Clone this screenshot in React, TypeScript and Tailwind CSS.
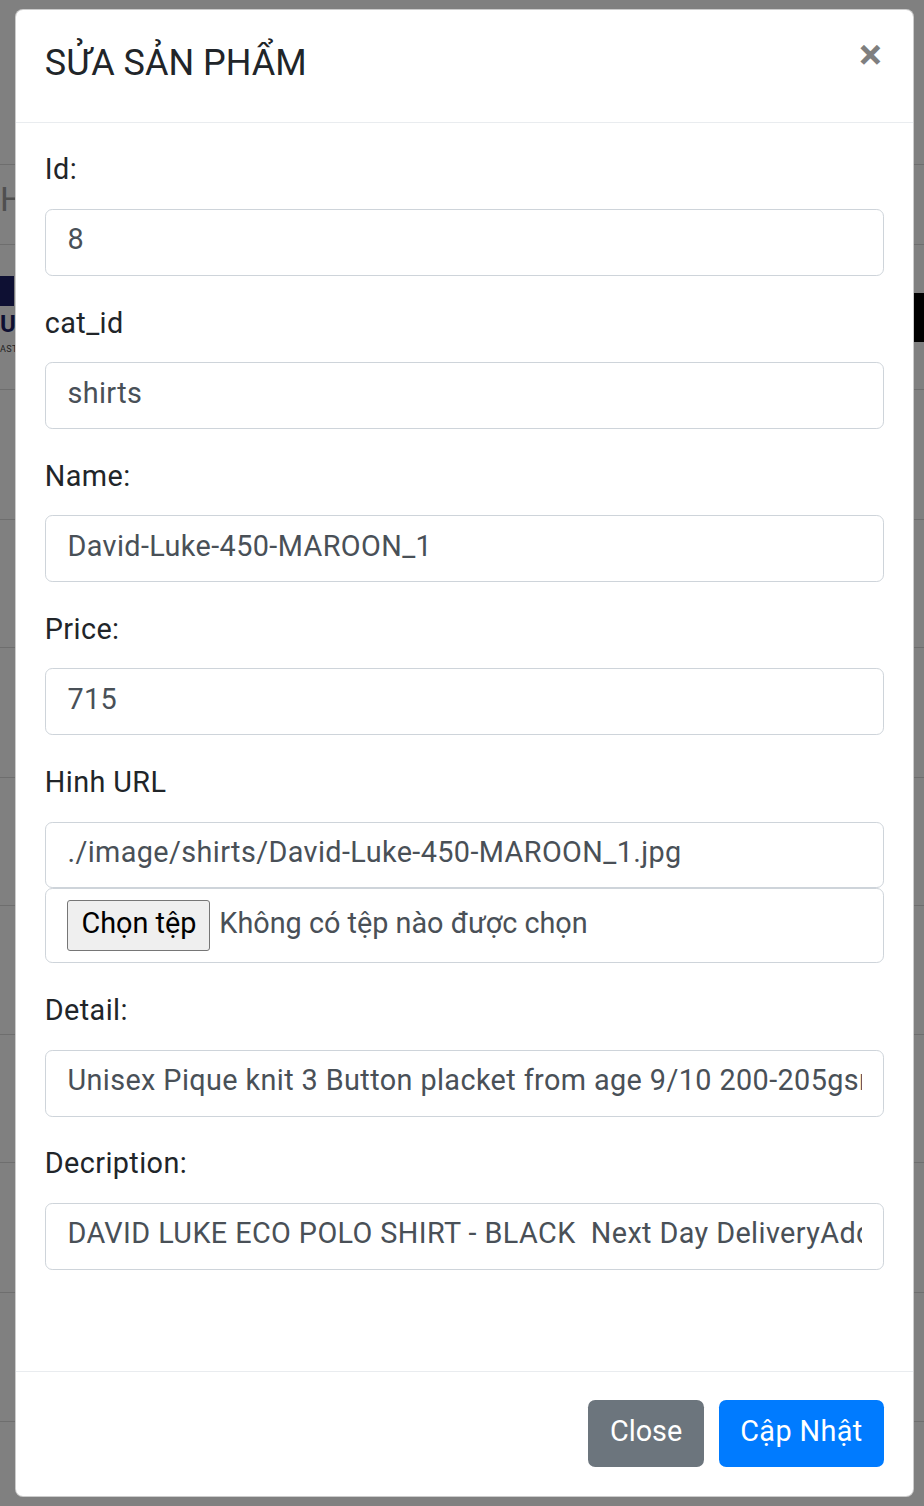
import React from "react";

const rows = [165, 80, 145, 130, 128, 130, 128, 129, 128, 130, 129, 130];

const fields = [
    { label: "Id:", value: "8" },
    { label: "cat_id", value: "shirts" },
    { label: "Name:", value: "David-Luke-450-MAROON_1" },
    { label: "Price:", value: "715" },
];

const font = { fontFamily: "Roboto, 'Noto Sans', sans-serif", letterSpacing: "0.4px" };

function Field({ label, value, file }: { label: string; value: string; file?: boolean }) {
    return (
        <div className="mb-[28.8px]">
            <label className="flex items-center h-[43.2px] pb-[6px] text-[28.8px] text-[#212529] mb-[14.4px]">{label}</label>
            <input
                readOnly
                value={value}
                className="block w-full h-[66.8px] pl-[21.6px] pr-[21.6px] pb-[6px] border border-[#ced4da] rounded-[7.2px] bg-white text-[28.8px] text-[#495057] outline-none"
                style={font}
            />
            {file && (
                <div className="flex items-center h-[75px] px-[21.6px] border border-[#ced4da] rounded-[7.2px] bg-white tracking-normal">
                    <span className="h-[51px] px-[13px] pb-[4px] flex items-center border border-[#767676] rounded-[3px] bg-[#efefef] text-[28.8px] text-black">
                        Chọn tệp
                    </span>
                    <span className="ml-[9px] pb-[4px] text-[28.8px] text-[#495057]">Không có tệp nào được chọn</span>
                </div>
            )}
        </div>
    );
}

export default function App() {
    return (
        <div className="relative h-[1506px] w-[924px] overflow-hidden bg-[#808080]" style={font}>
            {/* trang phía sau */}
            <div className="flex flex-col">
                {rows.map((h, i) => (
                    <div key={i} className="relative border-b border-[#6e6e6e] shrink-0" style={{ height: h }} />
                ))}
            </div>
            <div className="absolute left-0 top-[182px] text-[34px] leading-none text-[#4f4f4f]">H</div>
            <div className="absolute left-0 top-[276px] w-[14px] h-[30px] bg-[#0e1033]" />
            <div className="absolute left-0 top-[312px] text-[24px] leading-none font-bold text-[#0e1033]">U</div>
            <div className="absolute left-0 top-[345px] text-[9px] leading-none text-[#222]">AST</div>
            <div className="absolute right-0 top-[293px] w-[11px] h-[49px] bg-black" />

            {/* modal */}
            <div className="absolute left-[15px] top-[9px] w-[899px] bg-white border border-black/20 rounded-[8px]">
                <div className="flex items-start justify-between p-[28.8px] border-b border-[#e9ecef]">
                    <h5 className="h-[54px] pb-[6px] flex items-center text-[36px] tracking-normal text-[#212529]">SỬA SẢN PHẨM</h5>
                    <span className="text-[43.2px] leading-none font-bold text-black/50 -mt-[6px] mr-[2px]">×</span>
                </div>
                <div className="px-[28.8px] pt-[28.8px] pb-[72px]">
                    {fields.map((f) => (
                        <Field key={f.label} label={f.label} value={f.value} />
                    ))}
                    <Field label="Hinh URL" value="./image/shirts/David-Luke-450-MAROON_1.jpg" file />
                    <Field
                        label="Detail:"
                        value="Unisex Pique knit 3 Button placket from age 9/10 200-205gsm 65% Polyester 35% Cotton"
                    />
                    <Field
                        label="Decription:"
                        value="DAVID LUKE ECO POLO SHIRT - BLACK  Next Day DeliveryAdd to cart"
                    />
                </div>
                <div className="flex justify-end items-center gap-[14.4px] px-[28.8px] py-[28.8px] border-t border-[#e9ecef]">
                    <button className="h-[66.8px] px-[22px] pb-[4px] rounded-[7.2px] bg-[#6c757d] text-white text-[28.8px] tracking-normal">Close</button>
                    <button className="h-[66.8px] px-[21.6px] pb-[4px] rounded-[7.2px] bg-[#007bff] text-white text-[28.8px]">Cập Nhật</button>
                </div>
            </div>
        </div>
    );
}
